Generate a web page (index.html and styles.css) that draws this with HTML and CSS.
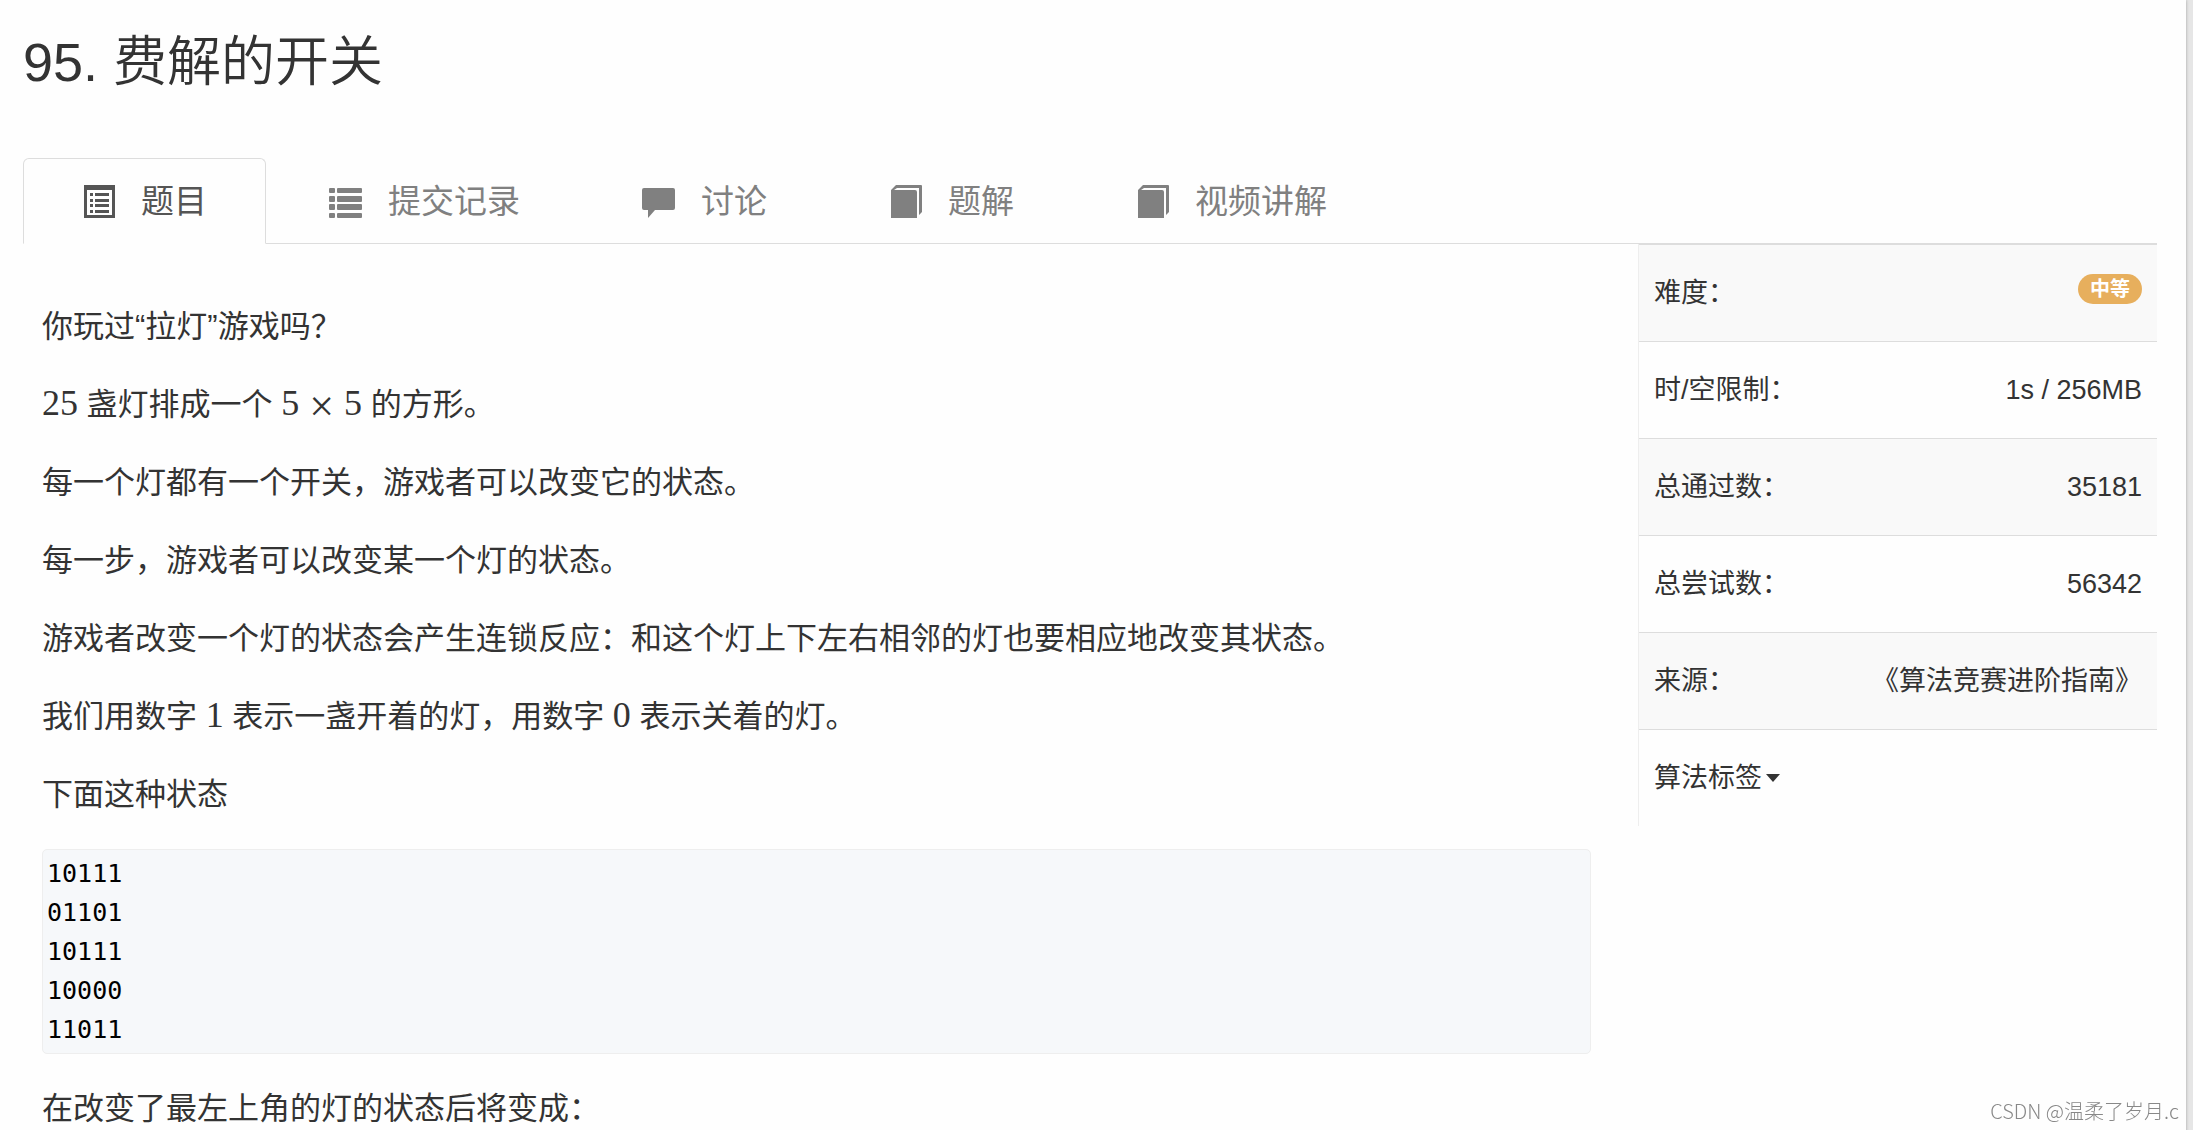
FILE: index.html
```html
<!DOCTYPE html>
<html lang="zh-CN">
<head>
    <meta charset="UTF-8">
    <meta name="viewport" content="width=device-width, initial-scale=1.0">
    <title>95. 费解的开关</title>
    <link rel="stylesheet" href="styles.css">
</head>
<body>
    <div class="page">
        <h1>95. 费解的开关</h1>

        <nav class="tabs">
            <a class="tab active" href="#problem">
                <svg class="icon" viewBox="0 0 33 33"><path fill-rule="evenodd" d="M2 0h31v33H2zM5 5v25h25V5zM8 8h3v3H8zM13 8h14v3H13zM8 14h3v3H8zM13 14h14v3H13zM8 19h3v3H8zM13 19h14v3H13zM8 25h3v3H8zM13 25h14v3H13z"/></svg>
                题目
            </a>
            <a class="tab" href="#submissions">
                <svg class="icon" viewBox="0 0 33 33"><rect x="0" y="3" width="6" height="5" rx="1"/><rect x="8" y="3" width="25" height="5" rx="1"/><rect x="0" y="11" width="6" height="6" rx="1"/><rect x="8" y="11" width="25" height="6" rx="1"/><rect x="0" y="19" width="6" height="6" rx="1"/><rect x="8" y="19" width="25" height="6" rx="1"/><rect x="0" y="28" width="6" height="5" rx="1"/><rect x="8" y="28" width="25" height="5" rx="1"/></svg>
                提交记录
            </a>
            <a class="tab" href="#discussion">
                <svg class="icon" viewBox="0 0 33 33"><path d="M2 3h29q2 0 2 2v18q0 2-2 2H13l-7 8v-8H2q-2 0-2-2V5q0-2 2-2z"/></svg>
                讨论
            </a>
            <a class="tab" href="#solutions">
                <svg class="icon" viewBox="0 0 33 33"><path d="M2 5L7 0h25q1 0 1 1v26l-3 3V3H8L5 5h21q2 0 2 2v26H2z"/></svg>
                题解
            </a>
            <a class="tab" href="#videos">
                <svg class="icon" viewBox="0 0 33 33"><path d="M2 5L7 0h25q1 0 1 1v26l-3 3V3H8L5 5h21q2 0 2 2v26H2z"/></svg>
                视频讲解
            </a>
        </nav>

        <div class="columns">
            <main class="content" id="problem">
                <p>你玩过“拉灯”游戏吗？</p>
                <p><span class="math">25</span> 盏灯排成一个 <span class="math">5<span class="times">×</span>5</span> 的方形。</p>
                <p>每一个灯都有一个开关，游戏者可以改变它的状态。</p>
                <p>每一步，游戏者可以改变某一个灯的状态。</p>
                <p>游戏者改变一个灯的状态会产生连锁反应：和这个灯上下左右相邻的灯也要相应地改变其状态。</p>
                <p>我们用数字 <span class="math">1</span> 表示一盏开着的灯，用数字 <span class="math">0</span> 表示关着的灯。</p>
                <p>下面这种状态</p>
<pre><code>10111
01101
10111
10000
11011</code></pre>
                <p>在改变了最左上角的灯的状态后将变成：</p>
            </main>

            <aside>
                <table class="info">
                    <tr>
                        <th scope="row">难度：</th>
                        <td><span class="badge">中等</span></td>
                    </tr>
                    <tr>
                        <th scope="row">时/空限制：</th>
                        <td>1s / 256MB</td>
                    </tr>
                    <tr>
                        <th scope="row">总通过数：</th>
                        <td>35181</td>
                    </tr>
                    <tr>
                        <th scope="row">总尝试数：</th>
                        <td>56342</td>
                    </tr>
                    <tr>
                        <th scope="row">来源：</th>
                        <td>《算法竞赛进阶指南》</td>
                    </tr>
                    <tr>
                        <td class="tags" colspan="2"><button class="toggle" type="button">算法标签<span class="caret"></span></button></td>
                    </tr>
                </table>
            </aside>
        </div>
    </div>

    <div class="watermark">CSDN @温柔了岁月.c</div>
</body>
</html>
```
FILE: styles.css
```css
* {
    margin: 0;
    padding: 0;
    box-sizing: border-box;
}

body {
    font-family: "Liberation Sans", "Noto Sans CJK SC", sans-serif;
    font-size: 31px;
    line-height: 47px;
    color: #333;
    background-color: #e6e6e6;
    height: 100vh;
    overflow: hidden;
}

.page {
    min-height: 100vh;
    margin-right: 7px;
    padding: 32px 29px 0 23px;
    background-color: #fefefe;
    box-shadow: 0 0 3px rgba(0, 0, 0, 0.3);
}

h1 {
    margin-bottom: 66px;
    font-size: 54px;
    font-weight: 350;
    line-height: 60px;
}

/* Tabs */
.tabs {
    display: flex;
    gap: 4px;
    border-bottom: 1px solid #ddd;
}

.tab {
    display: flex;
    align-items: center;
    gap: 26px;
    margin-bottom: -1px;
    padding: 19px 58px 18px;
    border: 1px solid transparent;
    border-radius: 6px 6px 0 0;
    font-size: 33px;
    color: #808080;
    text-decoration: none;
}

.tab.active {
    color: #555;
    background-color: #fefefe;
    border-color: #ddd;
    border-bottom-color: #fefefe;
}

.icon {
    width: 33px;
    height: 33px;
    fill: currentColor;
}

/* Problem text */
.columns {
    display: grid;
    grid-template-columns: 28fr 9fr;
    align-items: start;
}

.content {
    padding: 59px 47px 0 19px;
}

.content p,
.content pre {
    margin-bottom: 31px;
}

.math {
    font-family: "Liberation Serif", serif;
    font-size: 36px;
    line-height: 1;
}

.times {
    margin: 0 10px;
    font-size: 44px;
    line-height: 0;
    vertical-align: middle;
}

pre {
    padding: 4px;
    border: 1px solid #eee;
    border-radius: 5px;
    background-color: #f6f8fa;
}

code {
    display: block;
    font-family: "DejaVu Sans Mono", monospace;
    font-size: 25px;
    line-height: 39px;
    color: #000;
}

/* Info table */
.info {
    width: 100%;
    border-collapse: separate;
    border-spacing: 0;
    border-left: 1px solid #eee;
    font-size: 27px;
}

.info th,
.info td {
    height: 97px;
    padding: 0 15px;
    border-top: 1px solid #ddd;
    font-weight: normal;
    text-align: left;
}

.info td {
    text-align: right;
}

.info .tags {
    text-align: left;
}

.info tr:nth-child(odd) {
    background-color: #f9f9f9;
}

.badge {
    display: block;
    width: fit-content;
    margin: 0 0 8px auto;
    padding: 0 12px;
    border-radius: 15px;
    background-color: #e7af5d;
    color: #fff;
    font-size: 20px;
    font-weight: bold;
    line-height: 30px;
}

.toggle {
    display: flex;
    align-items: center;
    gap: 4px;
    border: none;
    background: none;
    font: inherit;
    color: inherit;
    cursor: pointer;
}

.caret {
    border-top: 8px solid;
    border-left: 7px solid transparent;
    border-right: 7px solid transparent;
}

.watermark {
    position: fixed;
    right: 14px;
    bottom: 4px;
    font-family: "Noto Sans CJK SC", sans-serif;
    font-size: 20px;
    font-weight: 300;
    line-height: 30px;
    color: #888;
}
```
